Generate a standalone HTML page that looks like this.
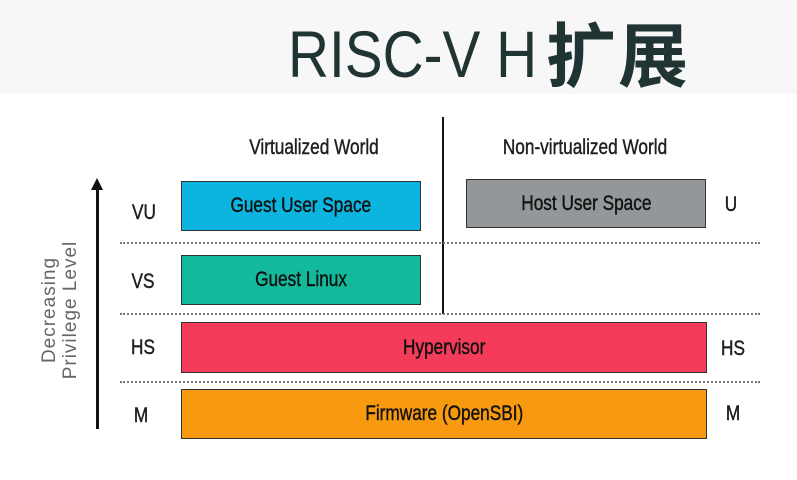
<!DOCTYPE html>
<html><head><meta charset="utf-8"><style>
body{margin:0;width:797px;height:480px;background:#fff;position:relative;overflow:hidden;font-family:"Liberation Sans","Noto Sans CJK SC",sans-serif}
.hdr{position:absolute;left:0;top:0;width:797px;height:94px;background:#f7f7f7}
.title{position:absolute;left:288px;top:14px;font-size:66px;color:#213434;white-space:nowrap;line-height:80px}
.title .l{display:inline-block;transform:scaleX(0.86);transform-origin:left;width:250px}
.title .c{font-family:"Noto Sans CJK SC",sans-serif;font-weight:bold;font-size:70px;position:absolute;left:258px;top:-2px;letter-spacing:2px}
.b{position:absolute;border:1.5px solid #333;box-sizing:border-box;display:flex;align-items:center;justify-content:center;font-size:21px;color:#111}
.b span,.t span{display:inline-block;transform:scaleX(0.82);-webkit-text-stroke:0.4px #111}
.t{position:absolute;font-size:21px;color:#222;white-space:nowrap;transform:translate(-50%,-50%)}
.d{position:absolute;left:120px;width:640px;border-top:2px dotted #777}
</style></head><body>
<div class="hdr"></div>
<div class="title"><span class="l">RISC-V H</span><span class="c">扩展</span></div>
<div style="position:absolute;left:442px;top:117px;width:2px;height:197px;background:#111"></div>
<div class="d" style="top:242px"></div>
<div class="d" style="top:313px"></div>
<div class="d" style="top:381px"></div>
<div style="position:absolute;left:96px;top:188px;width:3px;height:241px;background:#111"></div>
<div style="position:absolute;left:91px;top:178px;width:0;height:0;border-left:6px solid transparent;border-right:6px solid transparent;border-bottom:12px solid #111"></div>
<div style="position:absolute;left:60px;top:310px;transform:translate(-50%,-50%) rotate(-90deg);font-size:19px;color:#666;text-align:center;line-height:21px;white-space:nowrap;letter-spacing:1px">Decreasing<br>Privilege Level</div>
<div class="t" style="left:314px;top:148px"><span>Virtualized World</span></div>
<div class="t" style="left:585px;top:148px"><span>Non-virtualized World</span></div>
<div class="b" style="left:181px;top:181px;width:240px;height:50px;background:#0cb5df"><span>Guest User Space</span></div>
<div class="b" style="left:466px;top:179px;width:240px;height:49px;background:#939799"><span>Host User Space</span></div>
<div class="b" style="left:181px;top:255px;width:240px;height:50px;background:#13b99b"><span>Guest Linux</span></div>
<div class="b" style="left:181px;top:322px;width:526px;height:51px;background:#f43b5a"><span>Hypervisor</span></div>
<div class="b" style="left:181px;top:389px;width:526px;height:50px;background:#f89a10"><span>Firmware (OpenSBI)</span></div>
<div class="t" style="left:144px;top:213px"><span>VU</span></div>
<div class="t" style="left:143px;top:282px"><span>VS</span></div>
<div class="t" style="left:143px;top:348px"><span>HS</span></div>
<div class="t" style="left:141px;top:416px"><span>M</span></div>
<div class="t" style="left:731px;top:205px"><span>U</span></div>
<div class="t" style="left:733px;top:349px"><span>HS</span></div>
<div class="t" style="left:733px;top:414px"><span>M</span></div>
</body></html>
